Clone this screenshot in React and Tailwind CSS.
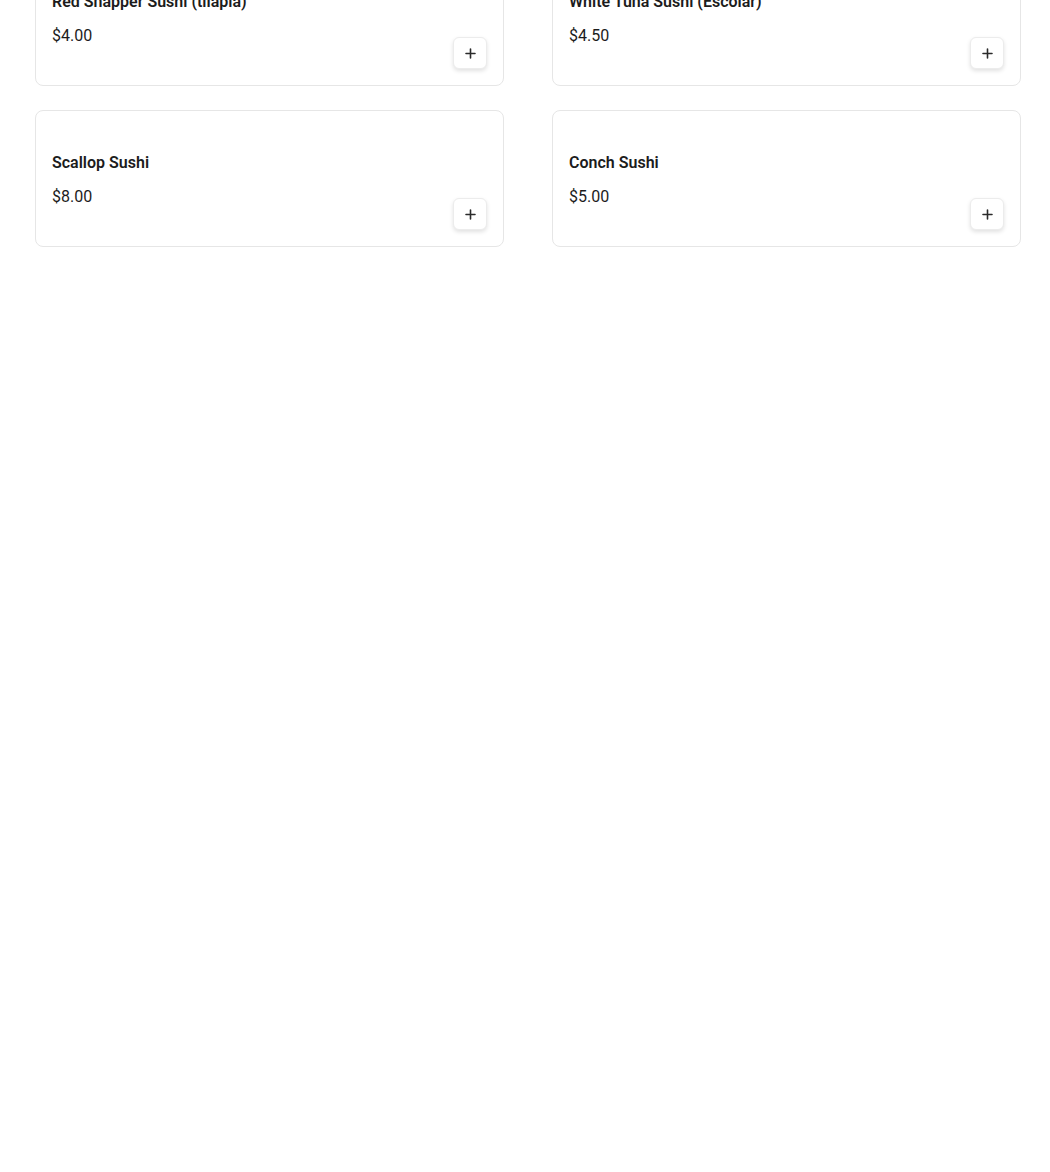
import React from "react";

const items = [
  { name: "Red Snapper Sushi (tilapia)", price: "$4.00" },
  { name: "White Tuna Sushi (Escolar)", price: "$4.50" },
  { name: "Scallop Sushi", price: "$8.00" },
  { name: "Conch Sushi", price: "$5.00" },
];

function Plus() {
  return (
    <svg width="11" height="11" viewBox="0 0 11 11" fill="none">
      <path d="M5.5 1v9M1 5.5h9" stroke="#2b2b2b" strokeWidth="1.6" strokeLinecap="round" />
    </svg>
  );
}

function Card({ name, price }) {
  return (
    <div className="flex items-end justify-between rounded-lg border border-[#e6e6e6] bg-white pl-4 pr-4 pb-4 pt-[40px] h-[137px]">
      <div className="flex flex-col mb-[21px]">
        <div className="text-[16px] leading-6 font-semibold text-[#1c1c1c]">{name}</div>
        <div className="mt-[10px] text-[16px] leading-6 text-[#1c1c1c]">{price}</div>
      </div>
      <button className="flex h-8 w-[34px] items-center justify-center rounded-md border border-[#ececec] bg-white shadow-[0_2px_4px_rgba(0,0,0,0.12)]">
        <Plus />
      </button>
    </div>
  );
}

export default function App() {
  return (
    <div className="min-h-[1172px] bg-white" style={{ fontFamily: "Roboto, 'Liberation Sans', sans-serif" }}>
      <div className="mt-[-51px] grid grid-cols-[469px_469px] gap-x-[48px] gap-y-[24px] pl-[35px]">
        {items.map((it) => (
          <Card key={it.name} {...it} />
        ))}
      </div>
    </div>
  );
}
